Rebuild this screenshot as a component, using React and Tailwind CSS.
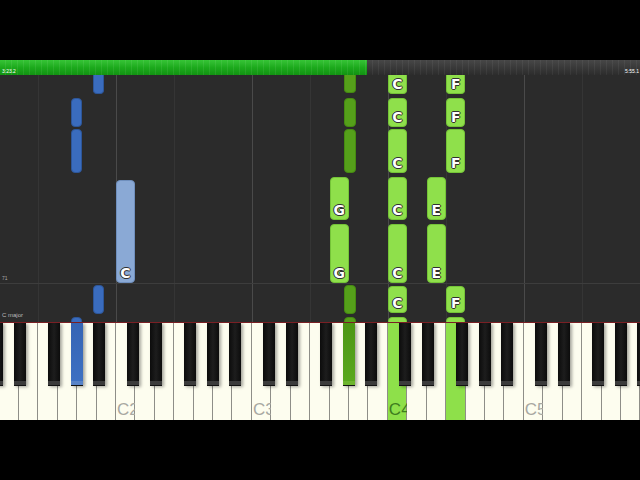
import React from "react";

// piano roll geometry: one octave is 136px, C1 starts off-screen at -20px
const W = 136 / 7;
const X0 = -20;
const BLACK = { 1: 11, 3: 34, 6: 68, 8: 91, 10: 113 }; // semitone -> offset in octave

const whiteX = (n) => X0 + n * W;
const blackX = (oct, semi) => X0 + oct * 136 + BLACK[semi];

const TOP = 75; // top of note area

const notes = [
  // left hand (blue)
  { x: blackX(0, 10), w: 11, y: [75, 94], c: "dark-blue", cut: true },
  { x: blackX(0, 10), w: 11, y: [285, 314], c: "dark-blue" },
  { x: blackX(0, 8), w: 11, y: [98, 127], c: "dark-blue" },
  { x: blackX(0, 8), w: 11, y: [129, 173], c: "dark-blue" },
  { x: blackX(0, 8), w: 11, y: [317, 340], c: "dark-blue" },
  { x: whiteX(7), w: 19, y: [180, 283], c: "light-blue", l: "C" },
  // right hand (green)
  { x: blackX(2, 8) + 0.5, w: 12, y: [75, 93], c: "dark-green", cut: true },
  { x: blackX(2, 8) + 0.5, w: 12, y: [98, 127], c: "dark-green" },
  { x: blackX(2, 8) + 0.5, w: 12, y: [129, 173], c: "dark-green" },
  { x: blackX(2, 8) + 0.5, w: 12, y: [285, 314], c: "dark-green" },
  { x: blackX(2, 8) + 0.5, w: 12, y: [317, 340], c: "dark-green" },
  { x: whiteX(21), w: 19, y: [75, 94], c: "green", l: "C", cut: true },
  { x: whiteX(21), w: 19, y: [98, 127], c: "green", l: "C" },
  { x: whiteX(21), w: 19, y: [129, 173], c: "green", l: "C" },
  { x: whiteX(21), w: 19, y: [177, 220], c: "green", l: "C" },
  { x: whiteX(21), w: 19, y: [224, 283], c: "green", l: "C" },
  { x: whiteX(21), w: 19, y: [286, 313], c: "green", l: "C" },
  { x: whiteX(21), w: 19, y: [317, 340], c: "green" },
  { x: whiteX(24), w: 19, y: [75, 94], c: "green", l: "F", cut: true },
  { x: whiteX(24), w: 19, y: [98, 127], c: "green", l: "F" },
  { x: whiteX(24), w: 19, y: [129, 173], c: "green", l: "F" },
  { x: whiteX(24), w: 19, y: [286, 313], c: "green", l: "F" },
  { x: whiteX(24), w: 19, y: [317, 340], c: "green" },
  { x: whiteX(18), w: 19, y: [177, 220], c: "green", l: "G" },
  { x: whiteX(18), w: 19, y: [224, 283], c: "green", l: "G" },
  { x: whiteX(23), w: 19, y: [177, 220], c: "green", l: "E" },
  { x: whiteX(23), w: 19, y: [224, 283], c: "green", l: "E" },
];

const noteColor = {
  "dark-blue": "bg-[#3a6cbe] border-[#2d5699]",
  "light-blue": "bg-[#8aa9d5] border-[#6f8fbd]",
  green: "bg-[#8fe04b] border-[#74c437]",
  "dark-green": "bg-[#55a01a] border-[#468a12]",
};

// highlighted keys
const litWhite = { 21: "bg-[#8ee04a]", 24: "bg-[#8ee04a]" };
const litBlack = { "0-8": "blue", "2-8": "green" };

const labels = { 7: "C2", 14: "C3", 21: "C4", 28: "C5" };

function Note({ n }) {
  return (
    <div
      className={`absolute border flex items-end justify-center ${n.cut ? "rounded-b-[4px] border-t-0" : "rounded-[4px]"} ${noteColor[n.c]}`}
      style={{ left: n.x, width: n.w, top: n.y[0] - TOP, height: n.y[1] - n.y[0] }}
    >
      {n.l && (
        <span className="text-[14px] leading-[15px] font-bold text-white pb-[1px] [font-family:'DejaVu_Sans',sans-serif] [text-shadow:0_0_1px_#222,1px_0_0_#333,-1px_0_0_#333,0_1px_0_#333,0_-1px_0_#333]">
          {n.l}
        </span>
      )}
    </div>
  );
}

export default function App() {
  const whites = Array.from({ length: 35 }, (_, i) => i);
  const blacks = [];
  for (let o = 0; o < 6; o++) {
    for (const s of [1, 3, 6, 8, 10]) {
      const x = blackX(o, s);
      if (x > -12 && x < 640) blacks.push({ o, s, x });
    }
  }
  const vlines = [];
  for (let o = 0; o < 6; o++) {
    vlines.push({ x: X0 + o * 136, c: "bg-[#4a4a4a]" });
    vlines.push({ x: X0 + o * 136 + 3 * W, c: "bg-[#353535]" });
  }

  return (
    <div className="w-[640px] h-[480px] bg-black flex flex-col overflow-hidden [font-family:'Liberation_Sans',Arial,sans-serif]">
      <div className="h-[60px] shrink-0" />

      {/* progress bar */}
      <div className="h-[15px] shrink-0 flex relative">
        <div className="w-[367px] h-full bg-gradient-to-b from-[#36c436] via-[#1caa1c] to-[#129212]">
          <div className="h-full w-full bg-[repeating-linear-gradient(90deg,transparent_0,transparent_5px,rgba(255,255,255,0.07)_5px,rgba(255,255,255,0.07)_6px)]" />
        </div>
        <div className="flex-1 h-full bg-gradient-to-b from-[#474747] to-[#2c2c2c]">
          <div className="h-full w-full bg-[repeating-linear-gradient(90deg,transparent_0,transparent_5px,rgba(255,255,255,0.05)_5px,rgba(255,255,255,0.05)_6px)]" />
        </div>
        <span className="absolute left-[2px] top-[9px] text-[5px] leading-none text-white">3:23.2</span>
        <span className="absolute right-[1px] top-[9px] text-[5px] leading-none text-white">5:55.1</span>
      </div>

      {/* note area */}
      <div className="h-[247px] shrink-0 relative bg-[#2b2b2b] overflow-hidden">
        {vlines.map((l, i) => (
          <div key={i} className={`absolute top-0 bottom-0 w-px ${l.c}`} style={{ left: Math.round(l.x) }} />
        ))}
        <div className="absolute left-0 right-0 top-[208px] h-px bg-[#3d3d3d]" />
        <span className="absolute left-[2px] top-[201px] text-[5px] leading-none text-[#aaa]">71</span>
        <span className="absolute left-[2px] top-[237px] text-[6px] leading-none text-[#bbb]">C major</span>
        {notes.map((n, i) => (
          <Note key={i} n={n} />
        ))}
      </div>

      {/* keyboard */}
      <div className="h-px shrink-0 bg-[#7a1f24]" />
      <div className="h-[97px] shrink-0 relative overflow-hidden bg-[#fdfdef]">
        <div className="flex h-full ml-[-20px]">
          {whites.map((i) => (
            <div
              key={i}
              className={`w-[19.4286px] shrink-0 h-full border-r border-[#8e8e88] flex items-end justify-start pl-[1px] ${litWhite[i] || "bg-[#fdfdef]"}`}
            >
              {labels[i] && (
                <span className={`text-[17px] leading-none pb-[2px] ${litWhite[i] ? "text-[#3e7d1e]" : "text-[#a8a8a2]"}`}>
                  {labels[i]}
                </span>
              )}
            </div>
          ))}
        </div>
        {blacks.map((b) => {
          const lit = litBlack[`${b.o}-${b.s}`];
          const body =
            lit === "blue"
              ? "bg-gradient-to-b from-[#3564b4] to-[#3d70c2]"
              : lit === "green"
              ? "bg-gradient-to-b from-[#4c9614] to-[#5aa81e]"
              : "bg-gradient-to-r from-[#0c0c0c] via-[#1d1d1d] to-[#0c0c0c]";
          const lip = lit === "blue" ? "bg-[#5883c8]" : lit === "green" ? "bg-[#6db52e]" : "bg-[#3b3b3b]";
          return (
            <div
              key={`${b.o}-${b.s}`}
              className="absolute top-0 h-[63px] w-[12px] flex flex-col shadow-[2px_1px_3px_rgba(0,0,0,0.35)]"
              style={{ left: b.x }}
            >
              <div className={`flex-1 ${body}`} />
              <div className={`h-[5px] ${lip} border-b border-[#111]`} />
            </div>
          );
        })}
      </div>

      <div className="flex-1" />
    </div>
  );
}
